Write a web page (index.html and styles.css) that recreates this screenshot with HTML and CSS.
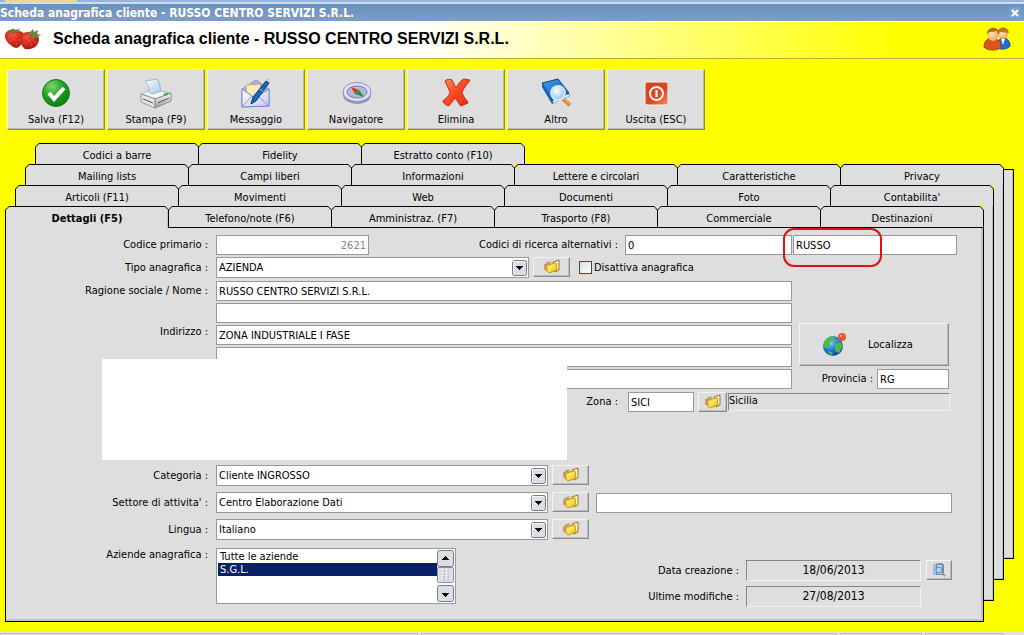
FILE: index.html
```html
<!DOCTYPE html>
<html lang="it">
<head>
<meta charset="utf-8">
<title>Scheda anagrafica cliente</title>
<link rel="stylesheet" href="styles.css">
</head>
<body>
<svg class="defs" aria-hidden="true">
  <defs>
    <linearGradient id="gold" x1="0" y1="0" x2="1" y2="1"><stop offset="0" stop-color="#fff8a8"/><stop offset=".55" stop-color="#fbdc3c"/><stop offset="1" stop-color="#e3ae14"/></linearGradient>
    <radialGradient id="green" cx=".35" cy=".25" r=".85"><stop offset="0" stop-color="#7fd46a"/><stop offset=".5" stop-color="#1da024"/><stop offset="1" stop-color="#0a7411"/></radialGradient>
    <linearGradient id="red" x1="0" y1="0" x2="1" y2="1"><stop offset="0" stop-color="#ff8a5c"/><stop offset=".5" stop-color="#fb4722"/><stop offset="1" stop-color="#dd2c0c"/></linearGradient>
    <linearGradient id="exit" x1="0" y1="0" x2="1" y2="1"><stop offset="0" stop-color="#d5401f"/><stop offset=".6" stop-color="#dd4a25"/><stop offset="1" stop-color="#f58a60"/></linearGradient>
    <linearGradient id="paper" x1="0" y1="0" x2="1" y2="1"><stop offset="0" stop-color="#fff"/><stop offset="1" stop-color="#9fc9ee"/></linearGradient>
    <linearGradient id="metal" x1="0" y1="0" x2="0" y2="1"><stop offset="0" stop-color="#fafafa"/><stop offset="1" stop-color="#9b9b9b"/></linearGradient>
    <linearGradient id="mail" x1="0" y1="0" x2="1" y2="1"><stop offset="0" stop-color="#fff"/><stop offset="1" stop-color="#c3c9f3"/></linearGradient>
    <linearGradient id="book" x1="0" y1="0" x2="1" y2="1"><stop offset="0" stop-color="#3da0ea"/><stop offset="1" stop-color="#0c4fa6"/></linearGradient>
    <radialGradient id="lens" cx=".4" cy=".35" r=".7"><stop offset="0" stop-color="#fff"/><stop offset="1" stop-color="#86c0f0"/></radialGradient>
    <radialGradient id="sea" cx=".35" cy=".3" r=".8"><stop offset="0" stop-color="#8fd4ff"/><stop offset=".5" stop-color="#1e78d8"/><stop offset="1" stop-color="#0b3f96"/></radialGradient>
    <radialGradient id="berry" cx=".4" cy=".3" r=".8"><stop offset="0" stop-color="#f0503c"/><stop offset=".6" stop-color="#cb2418"/><stop offset="1" stop-color="#8c120c"/></radialGradient>
    <radialGradient id="skin" cx=".4" cy=".35" r=".8"><stop offset="0" stop-color="#ffe4bc"/><stop offset="1" stop-color="#ef9d4e"/></radialGradient>
  </defs>
  <symbol id="folder" viewBox="0 0 18 16">
    <path d="M2 5l3-1 1-2 2 1 1 9-3 2-3-2z" fill="#d8b244"/>
    <path d="M10 3l6-2v10l-4 2z" fill="#fff6bd" stroke="#9a7420"/>
    <path d="M2 5v6" stroke="#c05a30"/><path d="M3 4h3" stroke="#4fa06c"/>
    <path d="M4 6l3 0 1-1 5-1 1 7-8 3-2-2z" fill="url(#gold)" stroke="#c79a1c"/>
  </symbol>
  <symbol id="down" viewBox="0 0 15 16">
    <rect x=".5" y=".5" width="14" height="15" rx="2" fill="#dcdee6" stroke="#777b88"/>
    <path d="M1.500 14V1.500H13" fill="none" stroke="#f6f6fa"/>
    <path d="M4 6h7v1h-1v1H9v1H8v1H7V9H6V8H5V7H4z"/>
  </symbol>
</svg>

<div class="app-edge"><span class="app-tab"></span></div>
<div class="titlebar">
  <span>Scheda anagrafica cliente - RUSSO CENTRO SERVIZI S.R.L.</span>
  <button class="close" type="button" aria-label="Chiudi"><svg viewBox="0 0 8 8"><path d="M1 1l6 6M7 1L1 7" stroke="#fff" stroke-width="2"/></svg></button>
</div>
<header class="heading">
  <svg class="berries" viewBox="0 0 38 26">
    <path d="M1 9c1-5 8-7 13-4 6 0 8 5 5 10-2 4-4 7-7 7-4-1-12-7-11-13z" fill="url(#berry)"/>
    <path d="M17 9c4-4 11-4 16-1 3 3 2 8 0 11-3 4-9 5-12 4-3-2-7-9-4-14z" fill="url(#berry)"/>
    <path d="M5 4l3 0 1-2 2 2 5-1-2 3-4 0-1 2-3-2-3 1z" fill="#6d7d31"/>
    <path d="M26 6l3-3 1 3 4-2-1 4 5 1-5 1 2 3-4-2-2 3-1-5-4 0z" fill="#71863a"/>
    <path d="M5 10h1m3 3h1m-4 2h1m5 3h1m-2-9h1m3 5h1m5-2h1m3 3h1m-4 3h1m4 1h1m3-3h1" stroke="#f58468"/>
  </svg>
  <h1>Scheda anagrafica cliente - RUSSO CENTRO SERVIZI S.R.L.</h1>
  <svg class="people" viewBox="0 0 28 26">
    <path d="M14 21c0-6 3-9 6-9 5 0 7 4 7 8-2 3-9 4-12 2z" fill="#1c6fd2" stroke="#0d4da4"/>
    <path d="M18 13l2 6 2-6z" fill="#fff"/>
    <circle cx="20" cy="8" r="5" fill="url(#skin)"/><path d="M14 8c0-8 11-9 12-1-4 0-8-3-12 1z" fill="#b8781c"/>
    <path d="M1 21c0-6 4-9 8-9s9 3 9 9c-3 4-13 4-17 0z" fill="#dc5420" stroke="#b13a10"/>
    <ellipse cx="10" cy="9" rx="5" ry="6" fill="url(#skin)"/><path d="M4 9c-1-9 13-10 12 0-2-2-1-4-3-4-4 2-7-1-9 4z" fill="#b06c15"/>
  </svg>
</header>

<nav class="toolbar">
  <button class="tool" type="button"><svg viewBox="0 0 32 32"><circle cx="16" cy="16" r="13.500" fill="url(#green)" stroke="#11801a"/><path d="M9 16l5 6 10-11" fill="none" stroke="#fff" stroke-width="4"/></svg>Salva (F12)</button>
  <button class="tool" type="button"><svg viewBox="0 0 32 32"><path d="M2 17l9-5 20 4-15 6z" fill="#f3f3f3" stroke="#b4b4b4"/><path d="M9 15c1-5-2-8-4-11l12-2c3 4 3 8 4 12l-9 3z" fill="url(#paper)" stroke="#9ab4cc"/><path d="M1 17l14 5v9L1 25z" fill="#e6e6e6" stroke="#999"/><path d="M15 22l16-6v8l-16 7z" fill="url(#metal)" stroke="#8c8c8c"/><path d="M3 22l10 4M18 26l11-5" stroke="#555"/><path d="M24 17l4-1-1 2h-3z" fill="#39b54a" stroke="#39b54a"/></svg>Stampa (F9)</button>
  <button class="tool" type="button"><svg viewBox="0 0 32 32"><path d="M2 12L16 3l13 9v17L2 30z" fill="#aab0e6" stroke="#8d93cf"/><path d="M6 8l14-1 4 13H7z" fill="#ffe9bd" stroke="#cfaa77"/><path d="M2 12l13 9 14-9v17L2 30z" fill="url(#mail)" stroke="#7d85c6"/><path d="M2 30l10-11m17 10L18 19" stroke="#8d94d0"/><path d="M11 27l2-7L26 4l3 2-13 18z" fill="#1769bd" stroke="#093d80"/><path d="M20 12l4 3M27 2l3 1" stroke="#d8b85b"/></svg>Messaggio</button>
  <button class="tool" type="button"><svg viewBox="0 0 32 32"><ellipse cx="17" cy="18" rx="14" ry="9" fill="#8f92bb"/><ellipse cx="17" cy="15" rx="14" ry="9.500" fill="#dfe1fa" stroke="#8e90bd"/><ellipse cx="17" cy="15" rx="10" ry="6" fill="#b5b8d8" stroke="#787ba8"/><path d="M11 10l8 3-4 4z" fill="#da3524"/><path d="M19 13l5 7-9-3z" fill="#218f36"/></svg>Navigatore</button>
  <button class="tool" type="button"><svg viewBox="0 0 32 32"><path d="M5 4c2-2 5-2 7-1l4 8c2-4 5-8 8-9l6 1c-3 5-7 8-8 13 2 5 5 7 6 10l-7 3c-3-3-4-6-6-8-3 3-4 7-7 8-2-2-5-2-5-5 3-3 7-6 7-9z" fill="url(#red)" stroke="#cf2b0d"/></svg>Elimina</button>
  <button class="tool" type="button"><svg viewBox="0 0 32 32"><path d="M2 6l16-4 11 14-16 8z" fill="url(#book)" stroke="#094590"/><path d="M2 6v4l10 17 18-8-1-3-16 7z" fill="#1362b8"/><path d="M13 25l16-7" stroke="#e1effb" stroke-width="2"/><path d="M23 22l7 6" stroke="#d98337" stroke-width="4"/><path d="M23 21l7 6" stroke="#f9c991"/><circle cx="18" cy="16" r="7" fill="url(#lens)" stroke="#d3e2ee" stroke-width="2"/></svg>Altro</button>
  <button class="tool" type="button"><svg viewBox="0 0 32 32"><rect x="5" y="5" width="23" height="23" rx="2" fill="url(#exit)" stroke="#fff3ee"/><circle cx="16.500" cy="16.500" r="6.500" fill="none" stroke="#fff" stroke-width="2"/><path d="M16.500 13v7" stroke="#fff" stroke-width="2"/></svg>Uscita (ESC)</button>
</nav>

<main class="sheets">
  <div class="tabs tabs-4"><button class="tab">Codici a barre</button><button class="tab">Fidelity</button><button class="tab">Estratto conto (F10)</button></div>
  <div class="tabs tabs-3"><button class="tab">Mailing lists</button><button class="tab">Campi liberi</button><button class="tab">Informazioni</button><button class="tab">Lettere e circolari</button><button class="tab">Caratteristiche</button><button class="tab">Privacy</button></div>
  <div class="tabs tabs-2"><button class="tab">Articoli (F11)</button><button class="tab">Movimenti</button><button class="tab">Web</button><button class="tab">Documenti</button><button class="tab">Foto</button><button class="tab">Contabilita'</button></div>
  <div class="tabs tabs-1"><button class="tab active">Dettagli (F5)</button><button class="tab">Telefono/note (F6)</button><button class="tab">Amministraz. (F7)</button><button class="tab">Trasporto (F8)</button><button class="tab">Commerciale</button><button class="tab">Destinazioni</button></div>
  <div class="edge edge-4"></div>
  <div class="edge edge-3"></div>
  <div class="edge edge-2"></div>

  <form class="panel">
    <div class="row">
      <label class="lead" for="codice">Codice primario :</label>
      <input id="codice" class="w-code muted" value="2621">
      <label class="grow" for="alt1">Codici di ricerca alternativi :</label>
      <div class="codes">
        <input id="alt1" value="0">
        <input id="alt2" aria-label="Secondo codice alternativo" value="RUSSO">
        <span class="highlight"></span>
      </div>
    </div>
    <div class="row">
      <label class="lead" for="tipo">Tipo anagrafica :</label>
      <div class="combo w-type"><select id="tipo"><option>AZIENDA</option></select><svg><use href="#down"/></svg></div>
      <button class="browse" type="button" aria-label="Apri tipi"><svg><use href="#folder"/></svg></button>
      <label class="check"><input type="checkbox">Disattiva anagrafica</label>
    </div>

    <div class="address">
      <label class="name-label" for="nome">Ragione sociale / Nome :</label>
      <label class="street-label" for="via">Indirizzo :</label>
      <div class="lines">
        <input id="nome" class="focused" value="RUSSO CENTRO SERVIZI S.R.L.">
        <input aria-label="Nome, seconda riga">
        <input id="via" value="ZONA INDUSTRIALE I FASE">
        <input aria-label="Indirizzo, seconda riga">
        <input aria-label="Localita">
      </div>
      <div class="place">
        <button class="locate" type="button"><svg viewBox="0 0 26 26"><circle cx="11" cy="14" r="10" fill="url(#sea)"/><path d="M3 9c3-5 7-5 10-4l-2 4-3 1-1 5-4 1c-2-2-1-5 0-7zM13 12l6-2 2 4-4 7-4-2zM6 19l4 1 1 3-4-1z" fill="#4eb944"/><path d="M14 10l4-4" stroke="#78848f" stroke-width="2"/><circle cx="20" cy="5" r="4" fill="#e25b2c"/><circle cx="19" cy="4" r="1" fill="#ffc29d"/></svg><span>Localizza</span></button>
        <div class="province"><label for="prov">Provincia :</label><input id="prov" value="RG"></div>
      </div>
      <div class="blank"></div>
    </div>

    <div class="row zone">
      <label for="zona">Zona :</label>
      <input id="zona" value="SICI">
      <button class="browse small" type="button" aria-label="Apri zone"><svg><use href="#folder"/></svg></button>
      <output class="sunken">Sicilia</output>
    </div>

    <div class="groups">
      <div class="row">
        <label class="lead" for="cat">Categoria :</label>
        <div class="combo"><select id="cat"><option>Cliente INGROSSO</option></select><svg><use href="#down"/></svg></div>
        <button class="browse" type="button" aria-label="Apri categorie"><svg><use href="#folder"/></svg></button>
      </div>
      <div class="row">
        <label class="lead" for="settore">Settore di attivita' :</label>
        <div class="combo"><select id="settore"><option>Centro Elaborazione Dati</option></select><svg><use href="#down"/></svg></div>
        <button class="browse" type="button" aria-label="Apri settori"><svg><use href="#folder"/></svg></button>
        <input class="sector-note" aria-label="Note settore">
      </div>
      <div class="row">
        <label class="lead" for="lingua">Lingua :</label>
        <div class="combo"><select id="lingua"><option>Italiano</option></select><svg><use href="#down"/></svg></div>
        <button class="browse" type="button" aria-label="Apri lingue"><svg><use href="#folder"/></svg></button>
      </div>
    </div>

    <div class="row bottom">
      <label class="lead" for="aziende">Aziende anagrafica :</label>
      <div class="listbox">
        <select id="aziende" size="4"><option>Tutte le aziende</option><option selected>S.G.L.</option></select>
        <svg class="scroll" viewBox="0 0 17 52">
          <rect x=".5" y=".5" width="16" height="16" rx="2" fill="#dcdee6" stroke="#777b88"/><path d="M5 10h7v-1h-1V8h-1V7H9V6H8v1H7v1H6v1H5z"/>
          <rect x=".5" y="17.500" width="16" height="15" rx="1" fill="#dddfe7" stroke="#8d909b"/><path d="M5 20h2m2 0h2m-6 3h2m2 0h2m-6 3h2m2 0h2m-6 3h2m2 0h2" stroke="#fff"/><path d="M6 21h2m2 0h2m-6 3h2m2 0h2m-6 3h2m2 0h2m-6 3h2m2 0h2" stroke="#a6a9b4"/>
          <rect x=".5" y="35.500" width="16" height="16" rx="2" fill="#dcdee6" stroke="#777b88"/><path d="M5 43h7v1h-1v1h-1v1H9v1H8v-1H7v-1H6v-1H5z"/>
        </svg>
      </div>
      <div class="dates">
        <span>Data creazione :</span><output class="sunken">18/06/2013</output>
        <button class="browse tiny" type="button" aria-label="Dettaglio modifiche"><svg viewBox="0 0 16 16"><path d="M2 2l9-1 2 2v10H3l-1-1z" fill="#7484b8"/><path d="M2 2h3v11H3l-1-1z" fill="#aab8e4"/><path d="M6 3h5v9H6z" fill="#c8d4f2"/><circle cx="8" cy="8" r="3" fill="#9be0fa" stroke="#4e8fd0"/><path d="M11 11l3 3" stroke="#dc8440" stroke-width="2"/></svg></button>
        <span>Ultime modifiche :</span><output class="sunken">27/08/2013</output>
      </div>
    </div>
  </form>
</main>
<footer class="status"><span></span><span></span><span></span><span></span></footer>
</body>
</html>
```

FILE: styles.css
```css
* { box-sizing: border-box; }
body {
  margin: 0;
  min-height: 100vh;
  display: flex;
  flex-direction: column;
  background: #ff0;
  color: #000;
  font: 11px/14px "DejaVu Sans Condensed", "Open Sans", sans-serif;
}
button, input, select, output { font: inherit; color: inherit; }
button { padding: 0; border: 0; }
.defs { position: absolute; width: 0; height: 0; }

/* window frame */
.app-edge { height: 4px; background: #8ab8f0; border-bottom: 2px solid #d4dce8; padding-left: 5px; }
.app-tab { display: block; width: 72px; height: 2px; background: #fbd478; }
.titlebar {
  height: 17px;
  display: flex;
  justify-content: space-between;
  align-items: center;
  padding-right: 4px;
  background: linear-gradient(#6b91bb, #7d9dc8);
  color: #fff;
  font-size: 12px;
  font-weight: bold;
}
.close { width: 11px; height: 11px; background: #7ba0cf; display: grid; place-items: center; }
.close svg { width: 8px; height: 8px; }
.heading {
  height: 38px;
  display: flex;
  align-items: center;
  padding: 0 13px 2px 4px;
  border-top: 1px solid #fff;
  border-bottom: 1px solid #b4b432;
  background: linear-gradient(90deg, #fff 0, #fff 40%, #ff0 88%);
}
.heading h1 { flex: 1; margin: 0 0 0 11px; font: bold 16px/20px "Liberation Sans", sans-serif; }
.berries { width: 38px; height: 26px; }
.people { width: 28px; height: 26px; }

.toolbar { display: flex; gap: 2px; padding: 10px 7px 13px; }
.tool {
  width: 98px;
  height: 61px;
  display: flex;
  flex-direction: column;
  align-items: center;
  justify-content: flex-end;
  gap: 4px;
  padding-bottom: 2px;
  background: #dedede;
  border: 1px solid;
  border-color: #f3f3c4 #8c8c50 #8c8c50 #f3f3c4;
  box-shadow: inset -1px -1px #b8b8b8;
}
.tool svg { width: 32px; height: 32px; }

/* stacked tab sheets, each one offset by 10px across and 21px down */
.sheets {
  flex: 1;
  display: grid;
  grid-template-columns: 10px 10px 10px 1fr 10px 10px 10px;
  grid-template-rows: 21px 21px 21px 21px 1fr 21px 21px 21px;
  padding: 0 10px 0 5px;
}
.tabs {
  display: grid;
  grid-template-columns: repeat(6, 1fr);
  z-index: 1;
  padding-right: 1px;
  background: linear-gradient(#dedede, #dedede) 8px 0 no-repeat;
  background-size: calc(100% - 16px) 100%;
}
.tabs-4 { grid-area: 1 / 4 / 2 / 8; background: none; padding-right: 0; margin-right: 31px; }
.tabs-3 { grid-area: 2 / 3 / 3 / 7; background-size: calc(50% - 8px) 100%; margin-right: 0; }
.tabs-2 { grid-area: 3 / 2 / 4 / 6; }
.tabs-1 { grid-area: 4 / 1 / 5 / 5; z-index: 3; }
.tabs-4 { grid-area: 1 / 4 / 2 / 8; margin-right: 0; padding-right: 1px; }
.tab {
  position: relative;
  z-index: 0;
  margin-right: -1px;
  padding-top: 4px;
  background: #000;
  clip-path: polygon(0 4px, 4px 0, calc(100% - 4px) 0, 100% 4px, 100% 100%, 0 100%);
}
.tab::before {
  content: "";
  position: absolute;
  z-index: -1;
  inset: 1px 1px 0;
  background: #dedede;
  clip-path: polygon(0 3px, 3px 0, calc(100% - 3px) 0, 100% 3px, 100% 100%, 0 100%);
}
.tab.active { margin-bottom: -1px; padding-bottom: 1px; font-weight: bold; }
.tab.active::before { box-shadow: inset -1px 0 #c0c0c0; }
.edge { background: #dedede; border: 1px solid #000; border-left: 0; box-shadow: inset -1px -1px #bcbcbc; }
.edge-4 { grid-area: 2 / 7 / 6 / 8; margin-top: 5px; }
.edge-3 { grid-area: 3 / 6 / 7 / 7; border-top: 0; }
.edge-2 { grid-area: 4 / 5 / 8 / 6; border-top: 0; }
.panel {
  grid-area: 5 / 1 / 9 / 5;
  z-index: 2;
  display: flex;
  flex-direction: column;
  gap: 2px;
  padding: 7px 26px 14px 0;
  background: #dedede;
  border: 1px solid #000;
  box-shadow: inset -2px -2px #c2c2c2;
}

/* fields */
.row { display: flex; align-items: center; }
.lead { width: 204px; margin-right: 6px; text-align: right; padding-right: 2px; }
.panel input:not([type=checkbox]), .combo, .listbox {
  height: 20px;
  min-width: 0;
  padding: 0 2px;
  background: #fff;
  border: 1px solid #999;
}
.w-code { width: 153px; text-align: right; }
.panel .muted { color: #888; }
.grow { flex: 1; text-align: right; margin-right: 7px; }
.codes { position: relative; display: grid; grid-template-columns: 167px 164px; gap: 1px; }
.highlight {
  position: absolute;
  left: 158px;
  top: -7px;
  width: 99px;
  height: 39px;
  border: 2px solid #dc1414;
  border-radius: 11px;
  pointer-events: none;
}
.panel .combo { display: grid; width: 332px; height: 21px; padding: 0 1px 0 2px; align-items: center; }
.panel .w-type { width: 313px; }
.combo select, .combo svg { grid-area: 1 / 1; }
.combo select { appearance: none; width: 100%; border: 0; padding: 0; background: none; }
.combo svg { width: 15px; height: 16px; justify-self: end; pointer-events: none; }
.browse, .locate {
  background: #dedede;
  border: 1px solid;
  border-color: #f4f4f4 #8c8c90 #8c8c90 #f4f4f4;
  box-shadow: inset -1px -1px #bcbcbc;
}
.browse { width: 37px; height: 20px; margin-left: 4px; display: grid; place-items: center; align-self: flex-start; }
.browse svg { width: 18px; height: 16px; }
.browse.small { width: 29px; }
.browse.tiny { width: 26px; margin: 0; }
.browse.tiny svg { width: 16px; }
.check { display: flex; align-items: center; gap: 2px; margin-left: 9px; }
.check input {
  appearance: none;
  width: 13px;
  height: 13px;
  margin: 0;
  border: 1px solid #1d5281;
  background: linear-gradient(135deg, #dcdcd7, #fff);
}

.address {
  position: relative;
  display: grid;
  grid-template-columns: 203px 1fr 150px;
  grid-template-rows: 41px 1fr;
  column-gap: 7px;
  margin-top: 1px;
  padding-right: 8px;
}
.address > label { text-align: right; padding: 3px 1px 0 0; }
.street-label { grid-row: 2; }
.lines { grid-area: 1 / 2 / 3 / 3; display: flex; flex-direction: column; gap: 2px; }
.panel .focused { background: #c6ffff; }
.place { grid-area: 1 / 3 / 3 / 4; display: flex; flex-direction: column; justify-content: flex-end; gap: 3px; }
.locate { height: 43px; display: flex; align-items: center; padding-left: 22px; gap: 20px; }
.locate svg { width: 26px; height: 26px; }
.province { display: flex; align-items: center; justify-content: flex-end; gap: 4px; }
.province input { width: 72px; }
.blank { position: absolute; left: 96px; top: 78px; width: 465px; height: 101px; background: #fff; }

.zone { justify-content: flex-end; margin-top: 1px; padding-right: 7px; }
.zone label { margin-right: 10px; }
.zone input { width: 66px; }
.sunken { border: 1px solid; border-color: #85858c #f0f0f0 #f0f0f0 #85858c; }
.zone .sunken { width: 222px; height: 18px; margin-left: 1px; }

.groups { display: flex; flex-direction: column; gap: 6px; margin-top: 51px; padding-right: 5px; }
.panel .sector-note { flex: 1; margin-left: 7px; }

.bottom { margin-top: 6px; padding-right: 5px; }
.row.bottom { align-items: flex-start; }
.panel .listbox { display: flex; width: 240px; height: 56px; padding: 1px; }
.listbox select { flex: 1; border: 0; padding: 0; overflow: hidden; outline: 0; background: #fff; }
.listbox option { height: 13px; min-height: 13px; padding: 0 2px; line-height: 13px; }
.listbox option:checked { background: #082068 linear-gradient(#082068, #082068); color: #fff; -webkit-text-fill-color: #fff; }
.scroll { width: 17px; height: 52px; }
.dates {
  margin-left: auto;
  padding-top: 12px;
  display: grid;
  grid-template-columns: auto 175px 26px;
  column-gap: 5px;
  row-gap: 5px;
  align-items: center;
}
.dates span { text-align: right; padding-right: 2px; }
.dates .sunken { height: 21px; text-align: center; font-size: 12px; line-height: 19px; }

.status {
  height: 4px;
  margin-top: 9px;
  display: grid;
  grid-template-columns: 422fr 420fr 82fr 80fr;
  gap: 3px;
  padding: 2px 20px 0 0;
  background: #e4e4d4;
}
.status span { border: 1px solid #c0c0b8; border-bottom: 0; }
```
